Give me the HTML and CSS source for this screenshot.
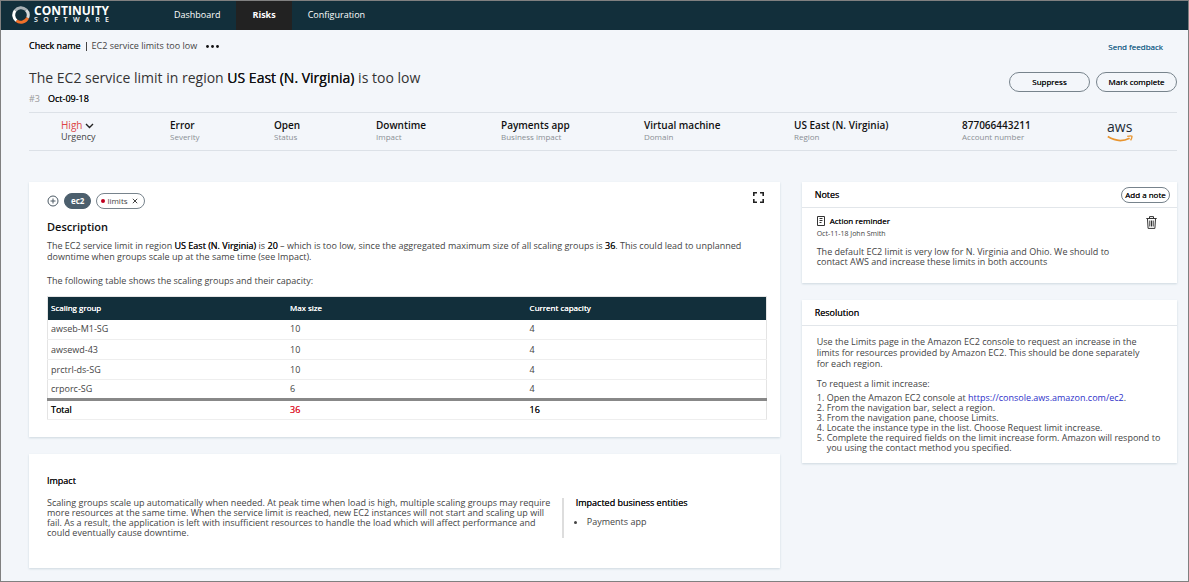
FILE: index.html
```html
<!DOCTYPE html>
<html lang="en">
<head>
  <meta charset="UTF-8">
  <meta name="viewport" content="width=device-width, initial-scale=1.0">
  <title>Continuity Software - Risks</title>
  <link rel="stylesheet" href="styles.css">
</head>
<body>
  <header class="topbar">
    <a class="brand" href="#">
      <svg class="brand-mark" viewBox="0 0 18 18" width="18" height="18" fill="none" stroke-width="3">
        <path d="M3.2 4.6A7.2 7.2 0 0 1 14 3.8" stroke="#a9b1b5"/>
        <path d="M14 3.8A7.2 7.2 0 0 1 15.6 11.8" stroke="#d5d9db"/>
        <path d="M15.6 11.8A7.2 7.2 0 0 1 4.4 14.6" stroke="#f0702a"/>
        <path d="M4.4 14.6A7.2 7.2 0 0 1 3.2 4.6" stroke="#ffffff"/>
      </svg>
      <span class="brand-text">
        <span class="brand-name">CONTINUITY</span>
        <span class="brand-sub"><i>S</i><i>O</i><i>F</i><i>T</i><i>W</i><i>A</i><i>R</i><i>E</i></span>
      </span>
    </a>
    <nav class="nav">
      <a class="nav-link" href="#">Dashboard</a>
      <a class="nav-link active" href="#">Risks</a>
      <a class="nav-link" href="#">Configuration</a>
    </nav>
  </header>

  <main class="page">
    <div class="crumbs">
      <span class="crumb-label">Check name</span>
      <span class="crumb-sep"></span>
      <span>EC2 service limits too low</span>
      <button class="icon-btn more" aria-label="More">
        <svg viewBox="0 0 13 3" width="13" height="3" fill="#111"><circle cx="1.5" cy="1.5" r="1.4"/><circle cx="6.5" cy="1.5" r="1.4"/><circle cx="11.5" cy="1.5" r="1.4"/></svg>
      </button>
      <a class="feedback" href="#">Send feedback</a>
    </div>

    <div class="heading">
      <div>
        <h1>The EC2 service limit in region <b>US East (N. Virginia)</b> is too low</h1>
        <div class="meta"><span class="meta-id">#3</span><span class="meta-date">Oct-09-18</span></div>
      </div>
      <div class="actions">
        <button class="btn">Suppress</button>
        <button class="btn">Mark complete</button>
      </div>
    </div>

    <dl class="facts">
      <div class="fact urgency">
        <dd>High <svg viewBox="0 0 9 6" width="9" height="6" fill="none" stroke="#222" stroke-width="1.4"><path d="M1 1l3.5 3.5L8 1"/></svg></dd>
        <dt>Urgency</dt>
      </div>
      <div class="fact"><dd>Error</dd><dt>Severity</dt></div>
      <div class="fact"><dd>Open</dd><dt>Status</dt></div>
      <div class="fact"><dd>Downtime</dd><dt>Impact</dt></div>
      <div class="fact"><dd>Payments app</dd><dt>Business impact</dt></div>
      <div class="fact"><dd>Virtual machine</dd><dt>Domain</dt></div>
      <div class="fact"><dd>US East (N. Virginia)</dd><dt>Region</dt></div>
      <div class="fact"><dd>877066443211</dd><dt>Account number</dt></div>
      <div class="aws">
        <span>aws</span>
        <svg viewBox="0 0 26 8" width="26" height="8" fill="none" stroke="#e8952f">
          <path d="M.8 1.6Q12 8.6 22.6 3.2" stroke-width="1.8"/>
          <path d="M20.2 1.4Q24.2.4 24.9 1.2 25.3 2.4 23.6 5.4" stroke-width="1.3"/>
        </svg>
      </div>
    </dl>

    <div class="columns">
      <div class="col">
        <section class="card description">
          <div class="tags">
            <button class="icon-btn" aria-label="Add tag">
              <svg viewBox="0 0 12 12" width="12" height="12" fill="none" stroke="#4c5a65"><circle cx="6" cy="6" r="5"/><path d="M3.5 6h5M6 3.5v5"/></svg>
            </button>
            <span class="tag tag-dark">ec2</span>
            <span class="tag"><span class="dot"></span>limits
              <button class="icon-btn" aria-label="Remove limits">
                <svg viewBox="0 0 6 6" width="6" height="6" stroke="#444"><path d="M.8.8l4.4 4.4M5.2.8L.8 5.2"/></svg>
              </button>
            </span>
            <button class="icon-btn expand" aria-label="Full screen">
              <svg viewBox="0 0 11 11" width="11" height="11" fill="none" stroke="#222" stroke-width="1.6"><path d="M.8 4V.8H4M7 .8h3.2V4M10.2 7v3.2H7M4 10.2H.8V7"/></svg>
            </button>
          </div>
          <h2>Description</h2>
          <p>The EC2 service limit in region <b>US East (N. Virginia)</b> is <b>20</b> – which is too low, since the aggregated maximum size of all scaling groups is <b>36</b>. This could lead to unplanned downtime when groups scale up at the same time (see Impact).</p>
          <p>The following table shows the scaling groups and their capacity:</p>
          <table class="groups">
            <thead>
              <tr><th>Scaling group</th><th>Max size</th><th>Current capacity</th></tr>
            </thead>
            <tbody>
              <tr><td>awseb-M1-SG</td><td>10</td><td>4</td></tr>
              <tr><td>awsewd-43</td><td>10</td><td>4</td></tr>
              <tr><td>prctrl-ds-SG</td><td>10</td><td>4</td></tr>
              <tr><td>crporc-SG</td><td>6</td><td>4</td></tr>
            </tbody>
            <tfoot>
              <tr><td>Total</td><td class="over">36</td><td>16</td></tr>
            </tfoot>
          </table>
        </section>

        <section class="card impact">
          <h3>Impact</h3>
          <div class="impact-body">
            <p>Scaling groups scale up automatically when needed. At peak time when load is high, multiple scaling groups may require more resources at the same time. When the service limit is reached, new EC2 instances will not start and scaling up will fail. As a result, the application is left with insufficient resources to handle the load which will affect performance and could eventually cause downtime.</p>
            <div class="entities">
              <h3>Impacted business entities</h3>
              <ul><li>Payments app</li></ul>
            </div>
          </div>
        </section>
      </div>

      <div class="col">
        <section class="card">
          <div class="card-head">
            <h3>Notes</h3>
            <button class="btn btn-small">Add a note</button>
          </div>
          <div class="card-body note">
            <div class="note-head">
              <div>
                <h4>
                  <svg viewBox="0 0 8 10" width="8" height="10" fill="none" stroke="#333"><path d="M.5.5h7v9h-7zM2.5 2.5h3M2.5 4.5h3M2.5 6.5h2"/></svg>
                  Action reminder
                </h4>
                <div class="note-by">Oct-11-18 John Smith</div>
              </div>
              <button class="icon-btn" aria-label="Delete note">
                <svg viewBox="0 0 11 13" width="11" height="13" fill="none" stroke="#333"><path d="M.3 2.5h10.4M3.5 2.2V.6h4v1.6M1.5 3l.6 9.4h6.8L9.5 3M3.8 4.5v6M5.5 4.5v6M7.2 4.5v6"/></svg>
              </button>
            </div>
            <p>The default EC2 limit is very low for N. Virginia and Ohio. We should to contact AWS and increase these limits in both accounts</p>
          </div>
        </section>

        <section class="card">
          <div class="card-head"><h3>Resolution</h3></div>
          <div class="card-body resolution">
            <p>Use the Limits page in the Amazon EC2 console to request an increase in the limits for resources provided by Amazon EC2. This should be done separately for each region.</p>
            <p class="steps-intro">To request a limit increase:</p>
            <ol>
              <li>Open the Amazon EC2 console at <a href="#">https://console.aws.amazon.com/ec2</a>.</li>
              <li>From the navigation bar, select a region.</li>
              <li>From the navigation pane, choose Limits.</li>
              <li>Locate the instance type in the list. Choose Request limit increase.</li>
              <li>Complete the required fields on the limit increase form. Amazon will respond to you using the contact method you specified.</li>
            </ol>
          </div>
        </section>
      </div>
    </div>
  </main>
</body>
</html>
```
FILE: styles.css
```css
* {
  box-sizing: border-box;
}
body {
  margin: 0;
  min-height: 100vh;
  border: 1px solid #808080;
  background-color: #f3f6fa;
  color: #444;
  font-family: "Open Sans", "Noto Sans", sans-serif;
  font-size: 9px;
  line-height: 10px;
}
h1, h2, h3, h4, p, dl, dd, ul, ol {
  margin: 0;
  padding: 0;
}
h3, h4, b, .crumb-label, .meta-date, .btn, .feedback, .groups th, .groups tfoot td {
  color: #111;
  font-weight: 500;
  text-shadow: 0 0 currentColor;
}
h3 {
  font-size: 9px;
}
a {
  color: #2e31c9;
  text-decoration: none;
}
button {
  font: inherit;
  cursor: pointer;
}
svg {
  display: block;
}

/* top bar */
.topbar {
  display: flex;
  height: 29px;
  background-color: #122f3b;
}
.brand {
  display: flex;
  align-items: center;
  gap: 4px;
  width: 157px;
  padding: 0 0 2px 11px;
  color: #fff;
}
.brand-text {
  display: grid;
}
.brand-name {
  font-size: 12px;
  font-weight: 700;
  line-height: 10px;
}
.brand-sub {
  display: flex;
  justify-content: space-between;
  font-size: 7px;
  font-weight: 600;
  line-height: 7px;
}
.brand-sub i {
  font-style: normal;
}
.nav {
  display: flex;
}
.nav-link {
  display: flex;
  align-items: center;
  padding: 0 16px 2px;
  color: #fff;
  font-size: 9px;
  font-weight: 500;
}
.nav-link.active {
  background-color: #222;
  font-weight: 700;
}

/* page heading */
.page {
  padding: 0 11px 12px 28px;
}
.crumbs {
  display: flex;
  align-items: center;
  gap: 5px;
  height: 32px;
}
.crumb-sep {
  width: 1px;
  height: 9px;
  background-color: #444;
}
.icon-btn {
  padding: 0;
  border: none;
  background: none;
}
.more {
  margin-left: 4px;
}
.feedback {
  margin: 2px 14px 0 auto;
  color: #2c6a8e;
  font-size: 8px;
}
.heading {
  display: flex;
  justify-content: space-between;
  align-items: flex-start;
  height: 50px;
  padding-top: 6px;
}
h1 {
  color: #333;
  font-size: 14px;
  font-weight: 400;
  line-height: 20px;
}
.meta {
  display: flex;
  gap: 8px;
  margin-top: 6px;
}
.meta-id {
  color: #999;
}
.actions {
  display: flex;
  gap: 6px;
  margin-top: 4px;
}
.btn {
  width: 81px;
  height: 20px;
  padding: 0;
  border: 1px solid #77838c;
  border-radius: 10px;
  background: none;
  font-size: 8px;
}
.btn-small {
  width: 49px;
  height: 16px;
}

/* facts strip */
.facts {
  display: grid;
  grid-template-columns: 109fr 104fr 102fr 125fr 143fr 150fr 168fr 145fr 70fr;
  height: 39px;
  padding: 6px 0 0 32px;
  border: 1px solid #dce1e7;
  border-width: 1px 0;
}
.fact {
  display: flex;
  flex-direction: column;
}
.fact dd {
  color: #111;
  font-size: 10px;
  font-weight: 600;
  line-height: 13px;
}
.fact dt {
  color: #8a8f94;
  font-size: 8px;
}
.urgency dd {
  display: flex;
  align-items: center;
  gap: 3px;
  color: #dc4545;
  font-weight: 400;
}
.urgency dt {
  color: #444;
  font-size: 9px;
}
.aws {
  color: #222b35;
  font-size: 14px;
  font-weight: 500;
  line-height: 16px;
}

/* cards */
.columns {
  display: grid;
  grid-template-columns: 2fr 1fr;
  gap: 22px;
  margin-top: 31px;
}
.col {
  display: flex;
  flex-direction: column;
  gap: 17px;
  min-width: 0;
}
.card {
  background-color: #fff;
  box-shadow: 0 1px 2px rgba(60, 100, 120, 0.2);
}
.description {
  padding: 10px 13px 17px 18px;
}
.tags {
  display: flex;
  align-items: center;
  gap: 5px;
  height: 18px;
}
.tag {
  display: flex;
  align-items: center;
  gap: 2px;
  height: 16px;
  padding: 0 6px 0 4px;
  border: 1px solid #77838c;
  border-radius: 8px;
  font-size: 8px;
}
.tag .icon-btn {
  margin-left: 2px;
}
.tag-dark {
  padding: 0 6px;
  border-color: #4c5f6d;
  background-color: #4c5f6d;
  color: #fff;
  font-weight: 700;
}
.dot {
  width: 4px;
  height: 4px;
  border-radius: 50%;
  background-color: #c00020;
}
.expand {
  margin: -8px 3px 0 auto;
}
h2 {
  margin-top: 10px;
  color: #111;
  font-size: 11px;
  font-weight: 600;
  line-height: 14px;
}
.description p {
  margin: 6px 0 10px;
  line-height: 11px;
}
.description p + p {
  margin-top: 13px;
}
.groups {
  width: 100%;
  border: 1px solid #e4e4e4;
  border-collapse: collapse;
  table-layout: fixed;
}
.groups th {
  height: 23px;
  padding: 0 3px;
  background-color: #122f3b;
  color: #fff;
  font-size: 8px;
  text-align: left;
}
.groups td {
  height: 20px;
  padding: 0 3px;
  border-bottom: 1px solid #eee;
}
.groups tfoot td {
  border-top: 3px solid #888;
}
.groups tfoot .over {
  color: #e02030;
}
.impact {
  padding: 22px 18px 30px;
}
.impact-body {
  display: grid;
  grid-template-columns: 515fr 200fr;
  margin-top: 12px;
}
.impact-body p {
  padding-right: 6px;
}
.entities {
  padding-left: 12px;
  border-left: 2px solid #ddd;
}
.entities ul {
  margin-top: 9px;
  padding-left: 11px;
}
.card-head {
  display: flex;
  justify-content: space-between;
  align-items: center;
  height: 26px;
  padding: 0 7px 0 13px;
  border-bottom: 1px solid #e2e6ea;
}
.card-body {
  padding: 8px 16px 16px 15px;
}
.note-head {
  display: flex;
  justify-content: space-between;
  align-items: flex-start;
  padding-right: 4px;
}
h4 {
  display: flex;
  align-items: center;
  gap: 5px;
  font-size: 8px;
}
.note-by {
  margin-top: 3px;
  font-size: 7px;
}
.note p {
  margin-top: 8px;
  padding-right: 48px;
}
.resolution {
  padding-bottom: 10px;
}
.resolution p {
  margin-top: 2px;
  padding-right: 16px;
  line-height: 11px;
}
.resolution .steps-intro {
  margin: 9px 0 4px;
}
.resolution ol {
  padding-left: 10px;
}
```
